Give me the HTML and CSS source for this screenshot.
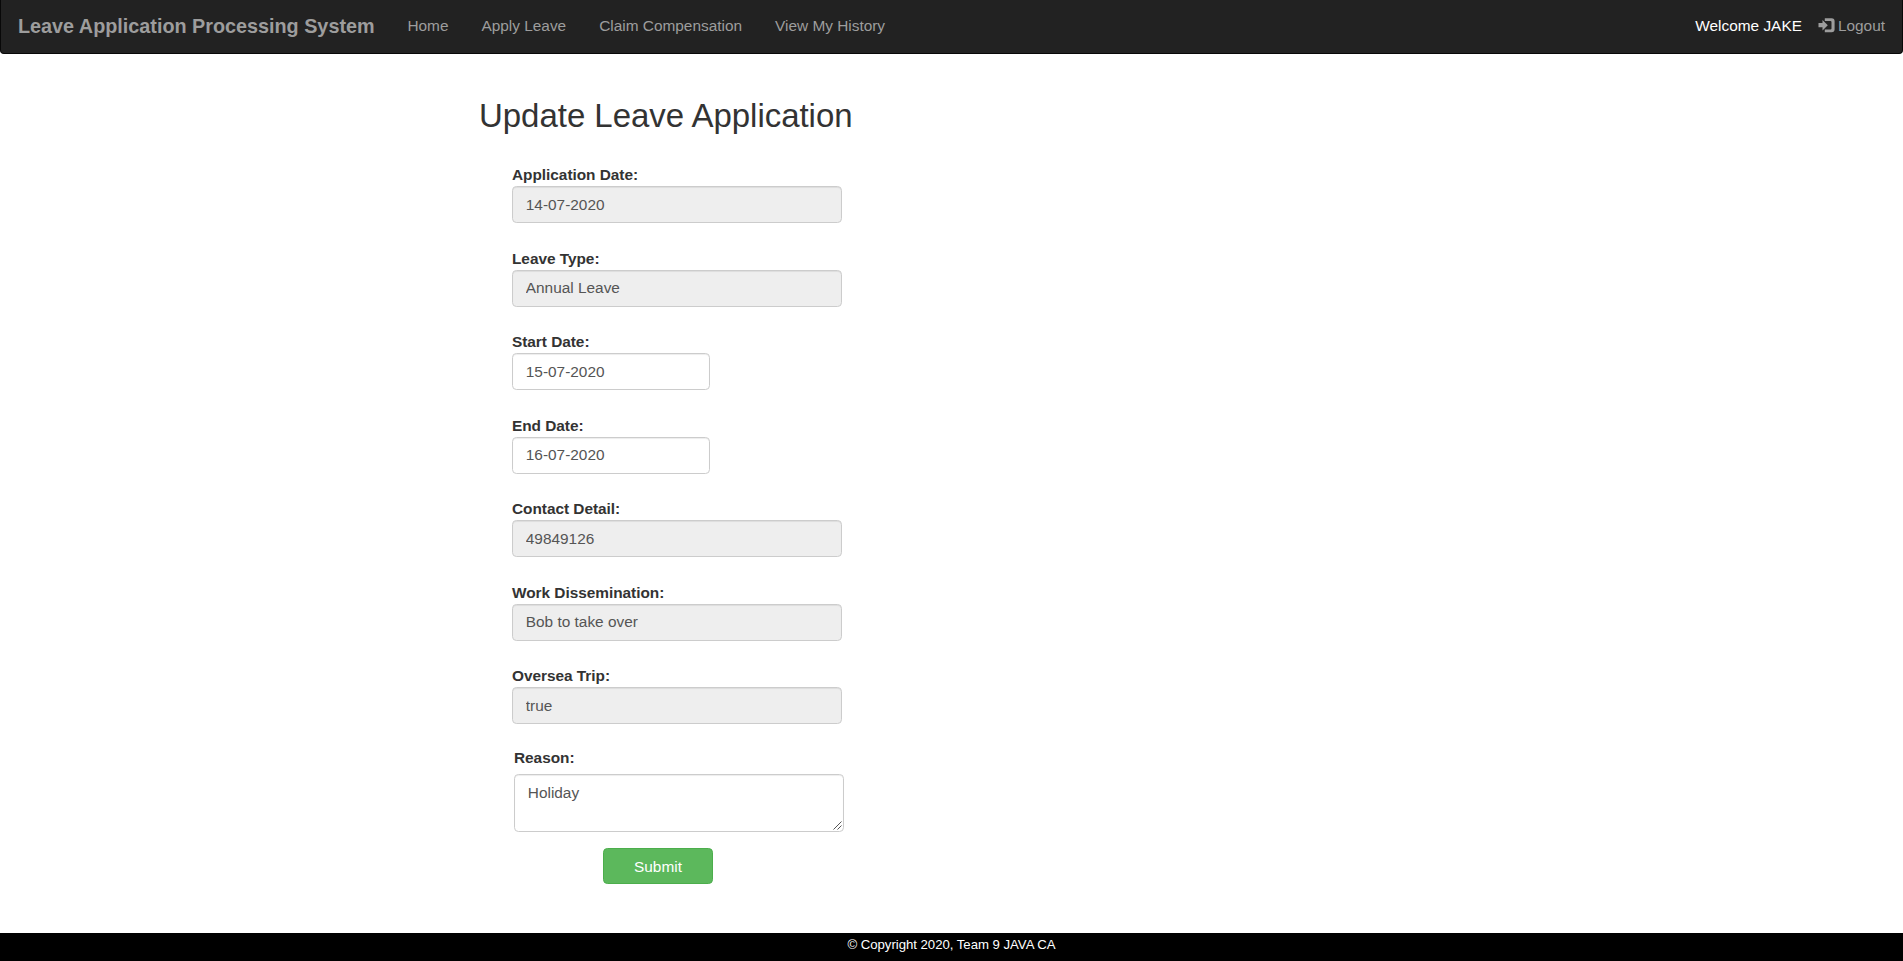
FILE: index.html
```
<!DOCTYPE html>
<html lang="en">
<head>
<meta charset="utf-8">
<title>Update Leave Application</title>
<link rel="stylesheet" href="styles.css">
</head>
<body>
<nav class="navbar">
  <a class="brand">Leave Application Processing System</a>
  <div class="links">
    <a class="home">Home</a>
    <a class="apply">Apply Leave</a>
    <a class="claim">Claim Compensation</a>
    <a class="history">View My History</a>
  </div>
  <div class="account">
    <span class="welcome">Welcome JAKE</span>
    <a class="logout"><svg class="icon" viewBox="0 0 17 15"><path d="M0.5 5.1h4V1.9L9.8 7.2 4.5 12.5V9.3H0.5z"/><path d="M6.8 0.2H13.6a3 3 0 0 1 3 3v8a3 3 0 0 1-3 3H6.8v-2.7h5.6a1.1 1.1 0 0 0 1.1-1.1V4a1.1 1.1 0 0 0-1.1-1.1H6.8z"/></svg><span class="logout-text">Logout</span></a>
  </div>
</nav>
<main class="content">
  <h2 class="title">Update Leave Application</h2>
  <form class="form">
    <div class="field"><label class="label">Application Date:</label><input class="control" value="14-07-2020" readonly></div>
    <div class="field"><label class="label">Leave Type:</label><input class="control" value="Annual Leave" readonly></div>
    <div class="field"><label class="label">Start Date:</label><input class="control date" value="15-07-2020"></div>
    <div class="field"><label class="label">End Date:</label><input class="control date" value="16-07-2020"></div>
    <div class="field"><label class="label">Contact Detail:</label><input class="control" value="49849126" readonly></div>
    <div class="field"><label class="label">Work Dissemination:</label><input class="control" value="Bob to take over" readonly></div>
    <div class="field"><label class="label">Oversea Trip:</label><input class="control" value="true" readonly></div>
    <div class="reason"><label class="label">Reason:</label><textarea class="control area">Holiday</textarea><svg class="grip" viewBox="0 0 9 9"><path d="M.5 8.5l8-8M4.5 8.5l4-4"/></svg></div>
    <button class="submit" type="button">Submit</button>
  </form>
</main>
<footer class="footer">© Copyright 2020, Team 9 JAVA CA</footer>
</body>
</html>
```
FILE: styles.css
```
* { box-sizing: border-box; }
body {
  margin: 0;
  height: 961px;
  display: flex;
  flex-direction: column;
  overflow: hidden;
  background: #fff;
  color: #333;
  font: 15.4px/22px "Liberation Sans", Arial, sans-serif;
}
.navbar {
  flex: none;
  height: 54px;
  display: flex;
  align-items: flex-start;
  padding: 15px 17px 0 17px;
  background: #222;
  border: 1px solid #080808;
  border-top: 0;
  border-radius: 0 0 4px 4px;
  color: #9d9d9d;
  white-space: nowrap;
}
.brand { width: 389.4px; font-size: 19.8px; font-weight: bold; line-height: 22px; }
.links { display: flex; gap: 33px; }
.account { margin-left: auto; display: flex; gap: 16px; }
.welcome { color: #fff; }
.logout { display: flex; gap: 3px; }
.icon { width: 17px; height: 15px; margin-top: 3px; fill: #9d9d9d; }
.content { flex: 1; padding: 44px 0 0 479px; }
.title { margin: 0; font-size: 33px; font-weight: 500; line-height: 36px; letter-spacing: -.03px; }
.form { width: 332px; margin: 30px 0 0 33px; }
.field { height: 83.5px; }
.label { display: block; height: 22px; font-weight: bold; letter-spacing: -.03px; white-space: nowrap; }
.control {
  display: block;
  width: 330px;
  height: 37.4px;
  margin: 0;
  padding: 6.6px 12.8px;
  border: 1px solid #ccc;
  border-radius: 4.4px;
  background: #fff;
  box-shadow: inset 0 1px 1px rgba(0, 0, 0, .075);
  color: #555;
  font: inherit;
  outline: 0;
}
.control:read-only { background: #eee; }
.date { width: 198px; }
.reason { position: relative; margin: -1.5px 0 0 2px; }
.reason .label { height: 27px; }
.area { height: 58px; resize: none; overflow: hidden; }
.grip {
  position: absolute;
  right: 2px;
  bottom: 2px;
  width: 9px;
  height: 9px;
  fill: none;
  stroke: #555;
}
.submit {
  display: block;
  width: 110px;
  height: 36px;
  margin: 16px 0 0 91px;
  padding: 1px 0 0;
  border: 1px solid #4cae4c;
  border-radius: 4.4px;
  background: #5cb85c;
  color: #fff;
  font: inherit;
}
.footer {
  flex: none;
  height: 28px;
  background: #000;
  color: #fff;
  text-align: center;
  font-size: 13.2px;
  line-height: 23px;
  letter-spacing: -.03px;
}
```
